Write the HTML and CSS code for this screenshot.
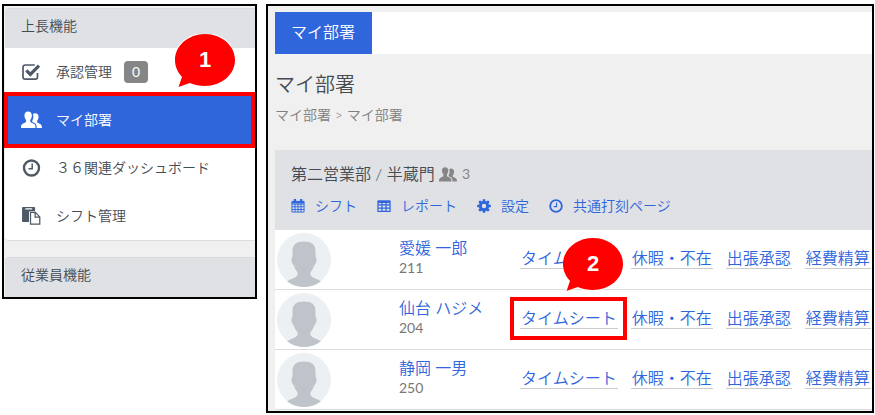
FILE: index.html
```html
<!DOCTYPE html>
<html lang="ja">
<head>
    <meta charset="UTF-8">
    <meta name="viewport" content="width=device-width, initial-scale=1.0">
    <title>マイ部署</title>
    <link rel="stylesheet" href="styles.css">
</head>
<body>
    <svg class="symbols" aria-hidden="true">
        <symbol id="people" viewBox="0 0 22 18">
            <path d="M7.500 0c2.500 0 3.900 1.700 3.900 4.200 0 1.900-.8 3.600-1.700 4.700v2.300c1.600 1 4.900 1.700 5.300 3.600.2.900.2 2 .2 2.700H0c0-.9 0-1.900.2-2.700.5-1.900 3.600-2.600 5.100-3.600V8.900C4.400 7.800 3.600 6.100 3.600 4.200 3.600 1.700 5 0 7.500 0z"/>
            <path d="M12.400 2.700c.7-.6 1.500-.9 2.400-.9 2.300 0 3.600 1.600 3.600 3.800 0 1.700-.6 3.200-1.500 4.100v2c1.500.9 4.200 1.500 4.700 3.200.2.800.3 1.700.3 2.600h-5.400c0-4.100-.7-4.900-4.700-6.500V9.600c1.300-2 1.700-4.700.6-6.900z"/>
        </symbol>
        <symbol id="clock" viewBox="0 0 18 18">
            <circle cx="9" cy="9" r="7.500" fill="none" stroke="currentColor" stroke-width="2.400"/>
            <path d="M9.700 4.500v5.200H6" fill="none" stroke="currentColor" stroke-width="1.500"/>
        </symbol>
        <symbol id="check" viewBox="0 0 20 18">
            <path d="M16 10v4a2.200 2.200 0 0 1-2.200 2.200H3.700A2.200 2.200 0 0 1 1.500 14V4.200A2.200 2.200 0 0 1 3.700 2h9.600" fill="none" stroke="currentColor" stroke-width="1.700"/>
            <path d="M4.800 7.400l4 4 8.700-8.800" fill="none" stroke="currentColor" stroke-width="3.200"/>
        </symbol>
        <symbol id="paste" viewBox="0 0 21 20">
            <path d="M1 0h12.500c.6 0 1 .4 1 1v3.600H9.200c-.9 0-1.500.6-1.500 1.500v10.700H1c-.6 0-1-.4-1-1V1c0-.6.4-1 1-1zm2.600 1.300v1.500h7.600V1.300z" fill-rule="evenodd"/>
            <path d="M9.400 6h5.300l5 5v8H9.400zM14.500 6v5.200h5" fill="none" stroke="currentColor" stroke-width="1.400"/>
        </symbol>
        <symbol id="calendar" viewBox="0 0 15 15">
            <path d="M1 2.500h13V14H1zM1 5.500h13M1 8.300h13M1 11.200h13M4.300 5v9M7.500 5v9M10.700 5v9" fill="none" stroke="currentColor"/>
            <path d="M1 2.300h13v2.500H1zM3 0h2.400v4H3zM9.700 0h2.400v4H9.700z"/>
        </symbol>
        <symbol id="grid" viewBox="0 0 15 13">
            <path d="M1 1.500h13v10.700H1zM1 5.300h13M1 8.700h13M5.300 3v9M9.700 3v9" fill="none" stroke="currentColor" stroke-width="1.300"/>
            <path d="M1 .5h13v2.800H1z"/>
        </symbol>
        <symbol id="gear" viewBox="0 0 14 14">
            <circle cx="7" cy="7" r="3.700" fill="none" stroke="currentColor" stroke-width="3"/>
            <path d="M7 .2v2.500M7 11.300v2.500M.2 7h2.500M11.300 7h2.500M2.200 2.200l1.900 1.900M9.900 9.900l1.900 1.900M2.200 11.800l1.900-1.900M9.900 4.100l1.900-1.900" stroke="currentColor" stroke-width="2.600"/>
        </symbol>
        <symbol id="avatar" viewBox="0 0 54 54">
            <circle cx="27" cy="27" r="27" fill="#ecf0f3"/>
            <path d="M27 8.500c7.500 0 11.500 3 11.500 9.500v6c1.300.6 1.300 3 .7 5.100-.4 1.500-1 2.700-2 3.200-.8 3.200-2.200 5-3.700 6.700v3.500c2.500 2.500 7 3.500 10.500 5.800A27 27 0 0 1 27 54a27 27 0 0 1-17-5.700c3.500-2.300 8-3.300 10.500-5.800V39c-1.500-1.700-2.900-3.500-3.700-6.700-1-.5-1.600-1.700-2-3.200-.6-2.100-.6-4.500.7-5.100v-6C15.500 11.500 19.500 8.500 27 8.500z" fill="#bfc4ca"/>
        </symbol>
        <symbol id="bubble" viewBox="0 0 60 54">
            <path d="M30 0c16.600 0 30 11.600 30 26S46.600 52 30 52c-5.600 0-10.700-1-15.200-3L3.500 53 7 43C2.500 38 0 32.500 0 26 0 11.600 13.400 0 30 0z"/>
        </symbol>
    </svg>

    <div class="page">
        <aside class="frame sidebar">
            <nav class="menu">
                <h2 class="menu-title">上長機能</h2>
                <a class="menu-item" href="#"><svg class="menu-icon"><use href="#check"/></svg>承認管理<span class="badge">0</span></a>
                <a class="menu-item active" href="#"><svg class="menu-icon"><use href="#people"/></svg>マイ部署</a>
                <a class="menu-item" href="#"><svg class="menu-icon"><use href="#clock"/></svg>３６関連ダッシュボード</a>
                <a class="menu-item" href="#"><svg class="menu-icon"><use href="#paste"/></svg>シフト管理</a>
            </nav>
            <nav class="menu">
                <h2 class="menu-title">従業員機能</h2>
            </nav>
            <div class="callout callout-one"><svg><use href="#bubble"/></svg><span>1</span></div>
        </aside>

        <main class="frame content">
            <div class="tabs"><a class="tab" href="#">マイ部署</a></div>
            <h1>マイ部署</h1>
            <p class="breadcrumb">マイ部署 &gt; マイ部署</p>
            <section class="group">
                <header class="group-head">
                    <h2>第二営業部 / 半蔵門 <svg class="members"><use href="#people"/></svg><span class="count">3</span></h2>
                    <div class="tools">
                        <a href="#"><svg><use href="#calendar"/></svg>シフト</a>
                        <a href="#"><svg><use href="#grid"/></svg>レポート</a>
                        <a href="#"><svg><use href="#gear"/></svg>設定</a>
                        <a href="#"><svg><use href="#clock"/></svg>共通打刻ページ</a>
                    </div>
                </header>
                <table class="staff">
                    <tr>
                        <td class="photo"><svg><use href="#avatar"/></svg></td>
                        <td class="name"><a href="#">愛媛 一郎</a><span>211</span></td>
                        <td class="links"><div><a href="#">タイムシート</a><a href="#">休暇・不在</a><a href="#">出張承認</a><a href="#">経費精算</a></div></td>
                    </tr>
                    <tr>
                        <td class="photo"><svg><use href="#avatar"/></svg></td>
                        <td class="name"><a href="#">仙台 ハジメ</a><span>204</span></td>
                        <td class="links"><div><a class="marked" href="#">タイムシート</a><a href="#">休暇・不在</a><a href="#">出張承認</a><a href="#">経費精算</a></div></td>
                    </tr>
                    <tr>
                        <td class="photo"><svg><use href="#avatar"/></svg></td>
                        <td class="name"><a href="#">静岡 一男</a><span>250</span></td>
                        <td class="links"><div><a href="#">タイムシート</a><a href="#">休暇・不在</a><a href="#">出張承認</a><a href="#">経費精算</a></div></td>
                    </tr>
                </table>
            </section>
            <div class="callout callout-two"><svg><use href="#bubble"/></svg><span>2</span></div>
        </main>
    </div>
</body>
</html>
```
FILE: styles.css
```css
* {box-sizing: border-box;}
body {margin: 0; background: #ffffff; color: #444b52; font-family: Lato, "Noto Sans CJK JP", sans-serif; font-weight: 350; font-size: 14px; line-height: 20px;}
h1, h2, p {margin: 0; font-weight: 350;}
a {color: #2f66dc; text-decoration: none;}
svg {fill: currentColor; flex: none;}
.symbols {position: absolute; width: 0; height: 0;}

.page {display: grid; grid-template-columns: 255px 1fr; gap: 9px; align-items: start; padding: 4px 1px 2px 2px;}
.frame {position: relative; border: 2px solid #000000; background: #f0f0f0;}

/* sidebar */
.sidebar {padding: 2px 0 0 1px;}
.menu {background: #ffffff; border-radius: 4px 0 0 4px; border-bottom: 1px solid #dddddd; margin-bottom: 16px;}
.menu:nth-child(2) {margin-bottom: 0; border-bottom: 0;}
.menu-title {height: 40px; padding: 7px 16px; background: #dfe1e5; border-top: 1px solid #d8dade; border-radius: 4px 0 0 0; font-size: 14px; line-height: 20px;}
.menu-item {display: flex; align-items: center; height: 48px; padding-left: 16px; color: #444b52; position: relative;}
.menu-icon {width: 21px; height: 18px; margin-right: 14px; color: #4d5a66;}
.badge {margin-left: 12px; width: 24px; height: 22px; border-radius: 4px; background: #868686; color: #ffffff; text-align: center; line-height: 22px; font-weight: 400;}
.active {background: #2f66dc; color: #ffffff;}
.active .menu-icon {color: #ffffff;}
.active::after {content: ""; position: absolute; inset: -4px 0 -4px -1px; border: 4px solid #ff0000;}

/* main area */
.content {padding: 6px 0 1px 7px;}
.tabs {display: flex; background: #ffffff;}
.tab {padding: 10px 17px 12px 16px; background: #2f66dc; color: #ffffff; font-size: 16px;}
h1 {margin-top: 14px; color: #444b52; font-size: 20px; line-height: 32px;}
.breadcrumb {margin: 5px 0 25px; color: #808080;}
.group-head {padding: 14px 16px; background: #dfe1e5;}
.group-head h2 {display: flex; align-items: center; font-size: 16px; white-space: pre;}
.members {width: 18px; height: 15px; color: #868686;}
.count {margin-left: 5px; color: #868686; font-size: 14px; font-weight: 400;}
.tools {display: flex; gap: 20px; margin-top: 12px;}
.tools a {display: flex; align-items: center;}
.tools svg {width: 14px; height: 14px; margin-right: 10px;}
.staff {width: 100%; border-spacing: 0; background: #ffffff;}
.staff td {height: 60px; padding: 0; border-bottom: 1px solid #dddddd; vertical-align: middle;}
.photo {width: 124px;}
.photo svg {display: block; width: 54px; height: 54px; margin-left: 2px;}
.staff .name {width: 121px; padding-bottom: 4px;}
.name a, .name span {display: block; font-size: 16px;}
.name span {color: #777777; font-size: 14px; font-weight: 400;}
.links div {display: flex; gap: 13px;}
.links a {padding: 0 1px; border-bottom: 1px solid #cccccc; font-size: 16px; line-height: 20px; white-space: nowrap; position: relative;}
.staff .links {padding-bottom: 3px;}
.marked::after {content: ""; position: absolute; inset: -11px -9px -12px -10px; border: 4px solid #ff0000;}

/* numbered balloons */
.callout {position: absolute; width: 60px; height: 54px; color: #ff0000;}
.callout svg {display: block; width: 60px; height: 54px; stroke: #ffffff; stroke-width: 2px; paint-order: stroke; overflow: visible;}
.callout span {position: absolute; inset: 0 0 2px; display: grid; place-items: center; color: #ffffff; font-family: "Liberation Sans", sans-serif; font-size: 22px; font-weight: 700;}
.callout-one {left: 171px; top: 28px;}
.callout-two {left: 295px; top: 232px;}
```
